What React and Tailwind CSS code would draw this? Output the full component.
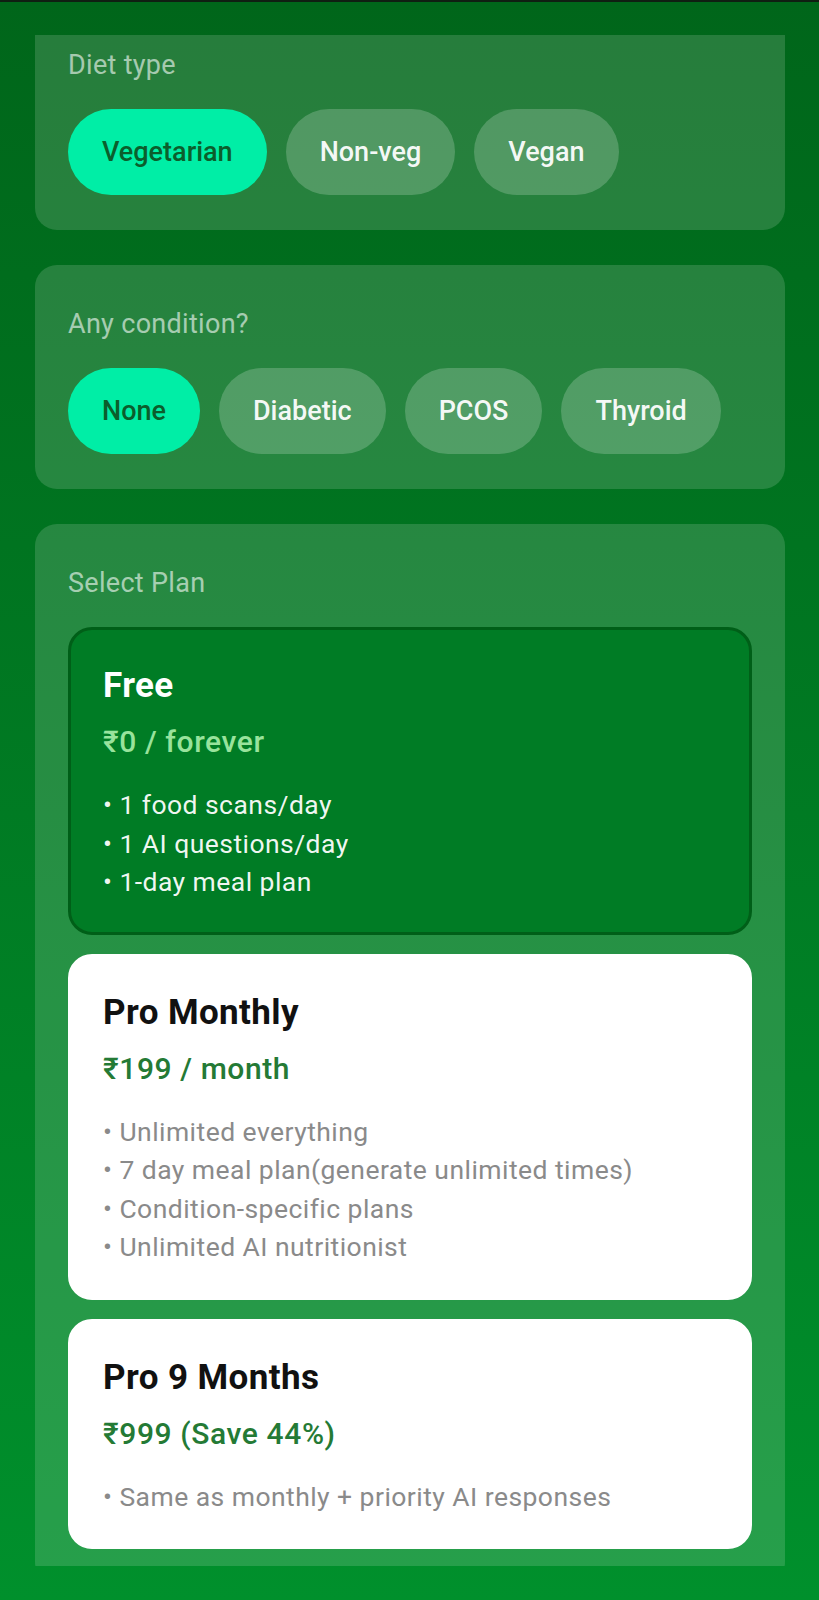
const dietTypes = ["Vegetarian", "Non-veg", "Vegan"];
const conditions = ["None", "Diabetic", "PCOS", "Thyroid"];

const plans = [
  {
    id: "free",
    name: "Free",
    price: "₹0 / forever",
    features: ["1 food scans/day", "1 AI questions/day", "1-day meal plan"],
  },
  {
    id: "monthly",
    name: "Pro Monthly",
    price: "₹199 / month",
    features: [
      "Unlimited everything",
      "7 day meal plan(generate unlimited times)",
      "Condition-specific plans",
      "Unlimited AI nutritionist",
    ],
  },
  {
    id: "nine",
    name: "Pro 9 Months",
    price: "₹999 (Save 44%)",
    features: ["Same as monthly + priority AI responses"],
  },
];

const Chip = ({ label, active }) => (
  <button
    className={
      active
        ? "h-[86px] px-[34px] rounded-full bg-[#00eea6] text-[#0b5e2c] text-[27px] font-medium"
        : "h-[86px] px-[34px] rounded-full bg-white/20 text-white/95 text-[27px] font-medium"
    }
  >
    {label}
  </button>
);

const Section = ({ title, children, className = "" }) => (
  <div className={`rounded-[22px] bg-white/15 pt-[41px] px-[33px] pb-[35px] ${className}`}>
    <p className="text-[27px] leading-[36px] tracking-[0.3px] text-white/60 mb-[26px]">{title}</p>
    {children}
  </div>
);

const PlanCard = ({ plan, selected }) => (
  <div
    className={
      selected
        ? "rounded-[24px] border-[3px] border-[#005f18] bg-[#007c25] pt-[33px] px-[32px] pb-[30px]"
        : "rounded-[24px] border-[3px] border-white bg-white pt-[33px] px-[32px] pb-[30px]"
    }
  >
    <h3
      className={`text-[35px] leading-[46px] font-bold tracking-[0.4px] ${selected ? "text-white" : "text-[#111111]"}`}
    >
      {plan.name}
    </h3>
    <p
      className={`mt-[13px] text-[30px] leading-[40px] font-medium tracking-[0.6px] ${selected ? "text-[#98e39c]" : "text-[#247a35]"}`}
    >
      {plan.price}
    </p>
    <ul
      className={`mt-[24px] text-[26.5px] leading-[38.5px] tracking-[0.45px] ${selected ? "text-white/95" : "text-[#8a8a8a]"}`}
    >
      {plan.features.map((f) => (
        <li key={f}>• {f}</li>
      ))}
    </ul>
  </div>
);

export default function App() {
  return (
    <div className="h-[1600px] bg-linear-to-b from-[#00661a] to-[#00902c] font-['Roboto',sans-serif] overflow-hidden">
      <div className="h-[2px] bg-[#0f1f12]" />
      <div className="mt-[33px] h-[1531px] overflow-hidden pl-[35px] pr-[34px]">
        <div className="flex flex-col gap-[35px] -mt-[29px]">
          <Section title="Diet type">
            <div className="flex gap-[19px]">
              {dietTypes.map((d, i) => (
                <Chip key={d} label={d} active={i === 0} />
              ))}
            </div>
          </Section>

          <Section title="Any condition?">
            <div className="flex gap-[19px]">
              {conditions.map((c, i) => (
                <Chip key={c} label={c} active={i === 0} />
              ))}
            </div>
          </Section>

          <Section title="Select Plan">
            <div className="flex flex-col gap-[19px]">
              {plans.map((p, i) => (
                <PlanCard key={p.id} plan={p} selected={i === 0} />
              ))}
            </div>
          </Section>
        </div>
      </div>
    </div>
  );
}
